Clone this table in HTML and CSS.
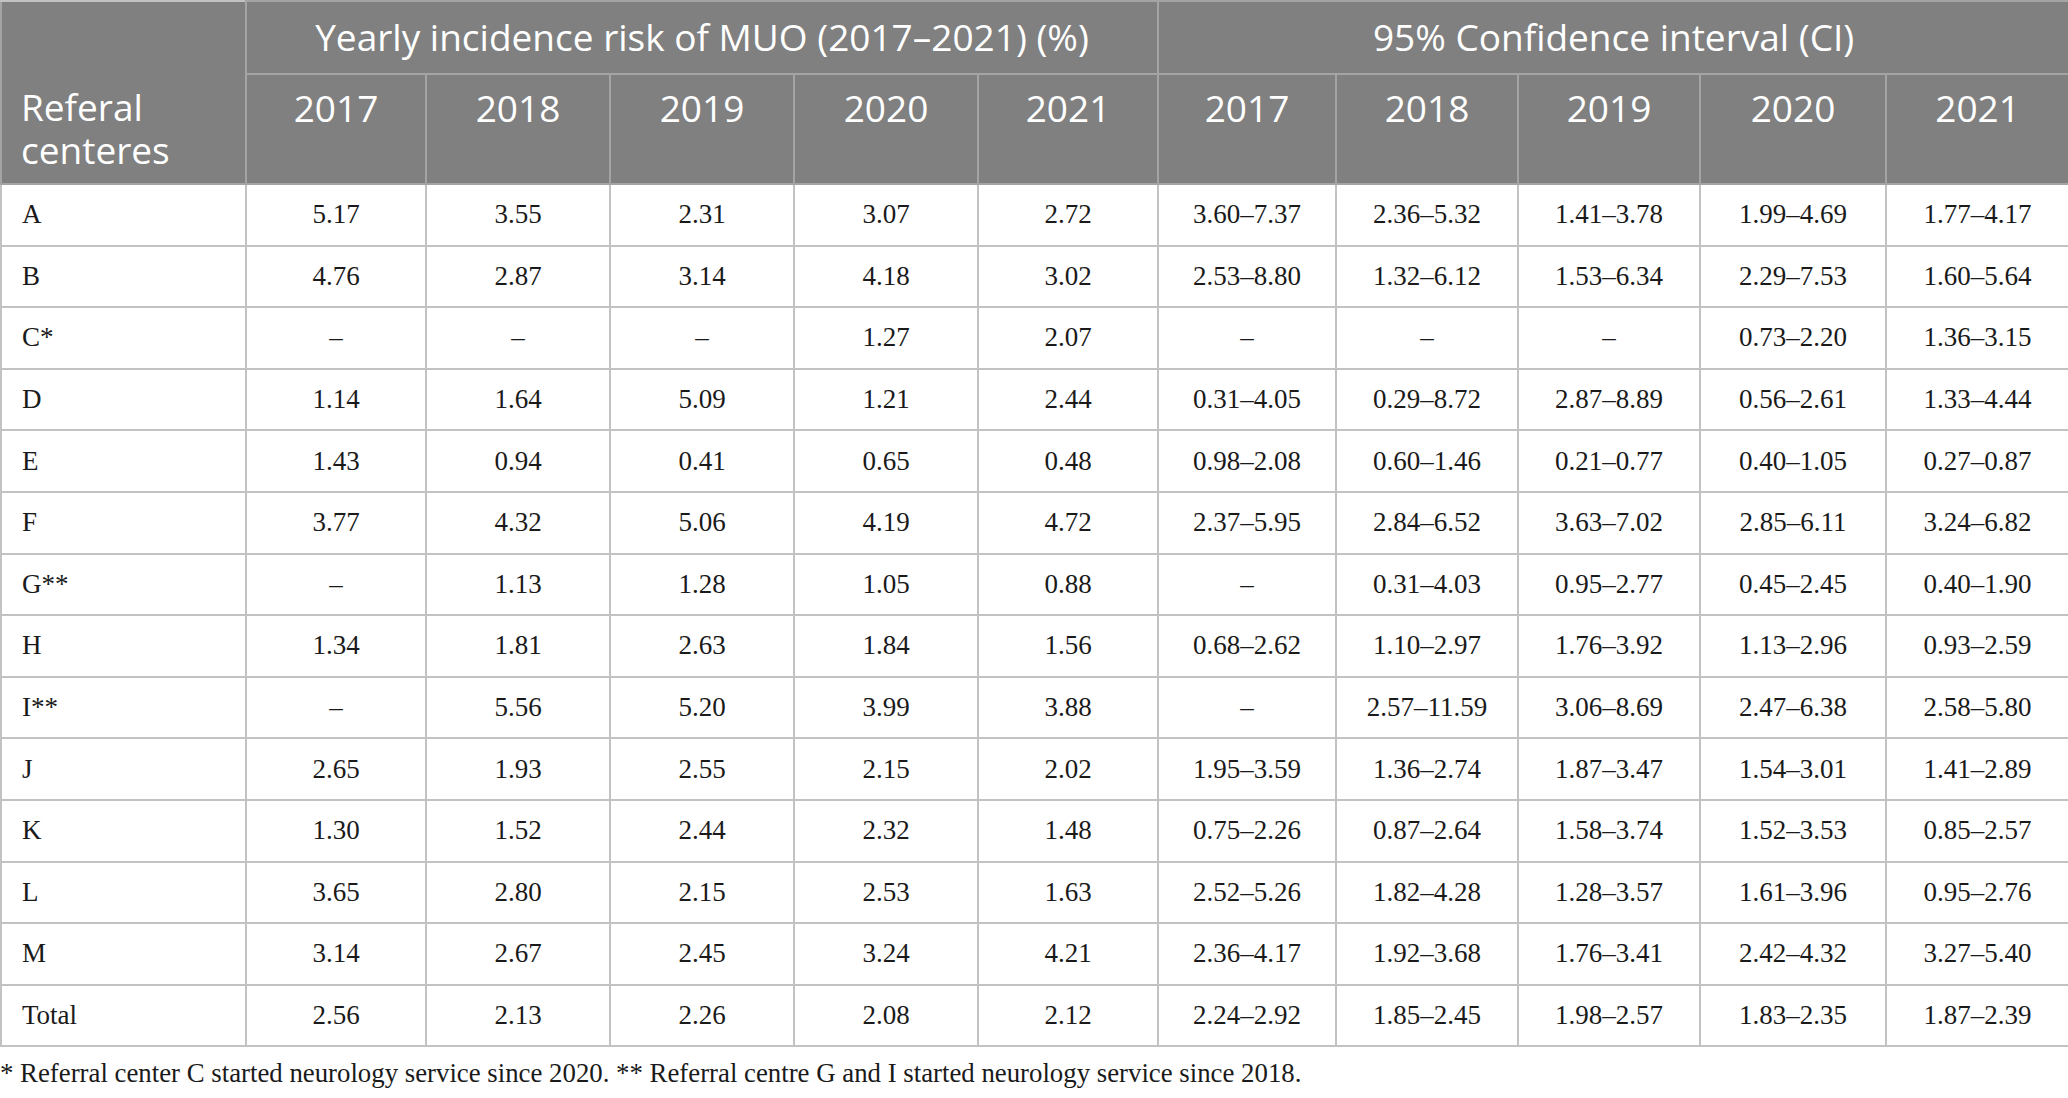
FILE: index.html
```html
<!DOCTYPE html>
<html lang="en">
<head>
<meta charset="utf-8">
<title>Yearly incidence risk of MUO</title>
<link rel="stylesheet" href="styles.css">
</head>
<body>
<div class="wrap">
<table class="data">
  <colgroup>
    <col class="c-first">
    <col class="c180"><col class="c184"><col class="c184"><col class="c184"><col class="c180">
    <col class="c178"><col class="c182"><col class="c182"><col class="c186"><col class="c183">
  </colgroup>
  <thead>
    <tr class="h1">
      <th rowspan="2" class="corner"><span class="ln">Referal</span><span class="ln">centeres</span></th>
      <th colspan="5">Yearly incidence risk of MUO (2017–2021) (%)</th>
      <th colspan="5">95% Confidence interval (CI)</th>
    </tr>
    <tr class="h2">
      <th>2017</th><th>2018</th><th>2019</th><th>2020</th><th>2021</th>
      <th>2017</th><th>2018</th><th>2019</th><th>2020</th><th>2021</th>
    </tr>
  </thead>
  <tbody>
    <tr><td>A</td><td>5.17</td><td>3.55</td><td>2.31</td><td>3.07</td><td>2.72</td><td>3.60–7.37</td><td>2.36–5.32</td><td>1.41–3.78</td><td>1.99–4.69</td><td>1.77–4.17</td></tr>
    <tr><td>B</td><td>4.76</td><td>2.87</td><td>3.14</td><td>4.18</td><td>3.02</td><td>2.53–8.80</td><td>1.32–6.12</td><td>1.53–6.34</td><td>2.29–7.53</td><td>1.60–5.64</td></tr>
    <tr><td>C*</td><td>–</td><td>–</td><td>–</td><td>1.27</td><td>2.07</td><td>–</td><td>–</td><td>–</td><td>0.73–2.20</td><td>1.36–3.15</td></tr>
    <tr><td>D</td><td>1.14</td><td>1.64</td><td>5.09</td><td>1.21</td><td>2.44</td><td>0.31–4.05</td><td>0.29–8.72</td><td>2.87–8.89</td><td>0.56–2.61</td><td>1.33–4.44</td></tr>
    <tr><td>E</td><td>1.43</td><td>0.94</td><td>0.41</td><td>0.65</td><td>0.48</td><td>0.98–2.08</td><td>0.60–1.46</td><td>0.21–0.77</td><td>0.40–1.05</td><td>0.27–0.87</td></tr>
    <tr><td>F</td><td>3.77</td><td>4.32</td><td>5.06</td><td>4.19</td><td>4.72</td><td>2.37–5.95</td><td>2.84–6.52</td><td>3.63–7.02</td><td>2.85–6.11</td><td>3.24–6.82</td></tr>
    <tr><td>G**</td><td>–</td><td>1.13</td><td>1.28</td><td>1.05</td><td>0.88</td><td>–</td><td>0.31–4.03</td><td>0.95–2.77</td><td>0.45–2.45</td><td>0.40–1.90</td></tr>
    <tr><td>H</td><td>1.34</td><td>1.81</td><td>2.63</td><td>1.84</td><td>1.56</td><td>0.68–2.62</td><td>1.10–2.97</td><td>1.76–3.92</td><td>1.13–2.96</td><td>0.93–2.59</td></tr>
    <tr><td>I**</td><td>–</td><td>5.56</td><td>5.20</td><td>3.99</td><td>3.88</td><td>–</td><td>2.57–11.59</td><td>3.06–8.69</td><td>2.47–6.38</td><td>2.58–5.80</td></tr>
    <tr><td>J</td><td>2.65</td><td>1.93</td><td>2.55</td><td>2.15</td><td>2.02</td><td>1.95–3.59</td><td>1.36–2.74</td><td>1.87–3.47</td><td>1.54–3.01</td><td>1.41–2.89</td></tr>
    <tr><td>K</td><td>1.30</td><td>1.52</td><td>2.44</td><td>2.32</td><td>1.48</td><td>0.75–2.26</td><td>0.87–2.64</td><td>1.58–3.74</td><td>1.52–3.53</td><td>0.85–2.57</td></tr>
    <tr><td>L</td><td>3.65</td><td>2.80</td><td>2.15</td><td>2.53</td><td>1.63</td><td>2.52–5.26</td><td>1.82–4.28</td><td>1.28–3.57</td><td>1.61–3.96</td><td>0.95–2.76</td></tr>
    <tr><td>M</td><td>3.14</td><td>2.67</td><td>2.45</td><td>3.24</td><td>4.21</td><td>2.36–4.17</td><td>1.92–3.68</td><td>1.76–3.41</td><td>2.42–4.32</td><td>3.27–5.40</td></tr>
    <tr><td>Total</td><td>2.56</td><td>2.13</td><td>2.26</td><td>2.08</td><td>2.12</td><td>2.24–2.92</td><td>1.85–2.45</td><td>1.98–2.57</td><td>1.83–2.35</td><td>1.87–2.39</td></tr>
  </tbody>
</table>
<p class="note">* Referral center C started neurology service since 2020. ** Referral centre G and I started neurology service since 2018.</p>
</div>
</body>
</html>
```

FILE: styles.css
```css
html, body {
  margin: 0;
  padding: 0;
  background: #ffffff;
}

.wrap {
  width: 2068px;
}

.data {
  width: 2068px;
  table-layout: fixed;
  border-collapse: collapse;
  border: 2px solid #c2c2c2;
}

.c-first { width: 245px; }
.c178 { width: 178px; }
.c180 { width: 180px; }
.c182 { width: 182px; }
.c183 { width: 183px; }
.c184 { width: 184px; }
.c186 { width: 186px; }

.data th {
  box-sizing: border-box;
  background: #7f807f;
  color: #ffffff;
  font-family: "Open Sans", "Noto Sans", sans-serif;
  font-weight: 400;
  font-size: 37px;
  line-height: 43px;
  border: 2px solid #a3a4a3;
  padding: 0 20px;
  text-align: center;
}

.data tr.h1 th {
  height: 73px;
  vertical-align: middle;
  padding-top: 0;
  padding-bottom: 2px;
}

.data tr.h2 th {
  height: 110px;
  vertical-align: top;
  padding-top: 11px;
}

.data tr.h1 th.corner {
  text-align: left;
  vertical-align: bottom;
  padding-left: 19px;
  padding-bottom: 12px;
  border-top-color: #c2c2c2;
}

.corner .ln {
  display: block;
  height: 43px;
}

.data td {
  box-sizing: border-box;
  height: 61.6px;
  padding: 0 10px;
  border: 2px solid #c2c2c2;
  font-family: "Liberation Serif", "Times New Roman", serif;
  font-size: 27px;
  color: #1a1a1a;
  text-align: center;
  vertical-align: middle;
}

.data td:first-child {
  text-align: left;
  padding-left: 20px;
}

.note {
  margin: 9px 0 0 0;
  font-family: "Liberation Serif", "Times New Roman", serif;
  font-size: 26.8px;
  line-height: 34px;
  color: #1a1a1a;
}
```
